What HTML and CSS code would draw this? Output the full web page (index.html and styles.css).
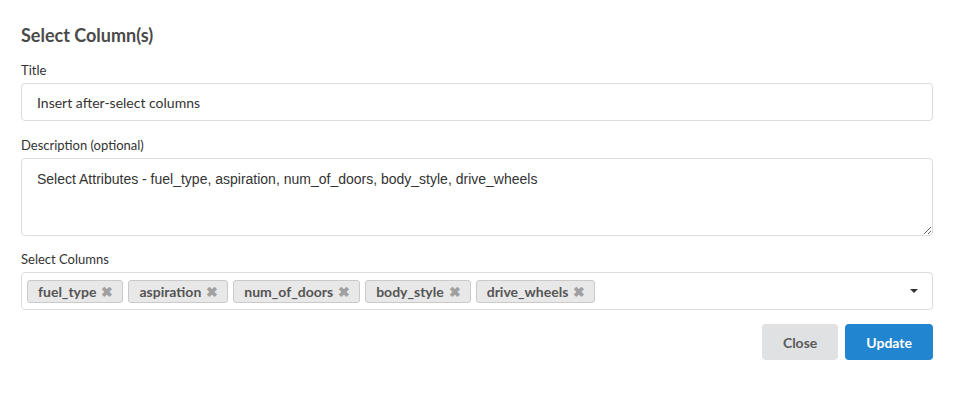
FILE: index.html
```html
<!DOCTYPE html>
<html lang="en">
<head>
    <meta charset="UTF-8">
    <title>Select Column(s)</title>
    <link rel="stylesheet" href="styles.css">
</head>
<body>
    <div class="modal">
        <h2 class="modal-header">Select Column(s)</h2>

        <div class="field">
            <label for="title">Title</label>
            <input type="text" id="title" class="text-input" value="Insert after-select columns">
        </div>

        <div class="field">
            <label for="description">Description (optional)</label>
            <textarea id="description" class="text-area">Select Attributes - fuel_type, aspiration, num_of_doors, body_style, drive_wheels</textarea>
        </div>

        <div class="field">
            <label>Select Columns</label>
            <div class="multi-select">
                <span class="tag">fuel_type <span class="tag-remove">&#10006;</span></span>
                <span class="tag">aspiration <span class="tag-remove">&#10006;</span></span>
                <span class="tag">num_of_doors <span class="tag-remove">&#10006;</span></span>
                <span class="tag">body_style <span class="tag-remove">&#10006;</span></span>
                <span class="tag">drive_wheels <span class="tag-remove">&#10006;</span></span>
                <span class="caret"></span>
            </div>
        </div>

        <div class="actions">
            <button class="btn btn-close">Close</button>
            <button class="btn btn-primary">Update</button>
        </div>
    </div>
</body>
</html>
```

FILE: styles.css
```css
body {
    margin: 0;
    padding: 0;
    background-color: #ffffff;
    font-family: Lato, "Helvetica Neue", Arial, sans-serif;
    color: #333;
}
.modal {
    padding: 23px 21px 20px 21px;
}
.modal-header {
    margin: 0 0 15px 0;
    font-size: 18px;
    font-weight: bold;
    color: #4a4a4a;
    line-height: 24px;
}
.field {
    margin-bottom: 15px;
}
.field:first-of-type {
    margin-bottom: 16px;
}
.field label {
    display: block;
    font-size: 13px;
    color: #333;
    line-height: 17px;
    margin-bottom: 4px;
}
.text-input {
    display: block;
    box-sizing: border-box;
    width: 100%;
    height: 38px;
    padding: 0 15px;
    border: 1px solid #dcdcdc;
    border-radius: 4px;
    font-family: Lato, sans-serif;
    font-size: 14px;
    color: #333;
    outline: none;
}
.text-area {
    display: block;
    box-sizing: border-box;
    width: 100%;
    height: 78px;
    padding: 11px 15px;
    border: 1px solid #dcdcdc;
    border-radius: 4px;
    font-family: "Liberation Sans", Arial, sans-serif;
    font-size: 14px;
    line-height: 18px;
    color: #333;
    resize: vertical;
    outline: none;
}
.multi-select {
    display: flex;
    align-items: center;
    gap: 5px;
    box-sizing: border-box;
    height: 38px;
    padding: 0 14px 0 5px;
    border: 1px solid #dcdcdc;
    border-radius: 4px;
}
.tag {
    display: inline-flex;
    align-items: center;
    box-sizing: border-box;
    height: 23px;
    padding: 0 9px 0 10px;
    background-color: #e8e8e8;
    border: 1px solid #cacaca;
    border-radius: 3px;
    font-size: 14px;
    font-weight: bold;
    color: #555;
}
.tag-remove {
    margin-left: 5px;
    font-size: 14px;
    color: #a0a0a0;
}
.caret {
    margin-left: auto;
    width: 0;
    height: 0;
    border-left: 4px solid transparent;
    border-right: 4px solid transparent;
    border-top: 4px solid #333;
}
.actions {
    display: flex;
    justify-content: flex-end;
    gap: 7px;
    margin-top: -1px;
}
.btn {
    height: 36px;
    padding: 0 21px;
    border: none;
    border-radius: 4px;
    font-family: Lato, sans-serif;
    font-size: 14px;
    font-weight: bold;
    cursor: pointer;
}
.btn-close {
    background-color: #e0e1e2;
    color: #5a5a5a;
}
.btn-primary {
    background-color: #2185d0;
    color: #ffffff;
}
```
